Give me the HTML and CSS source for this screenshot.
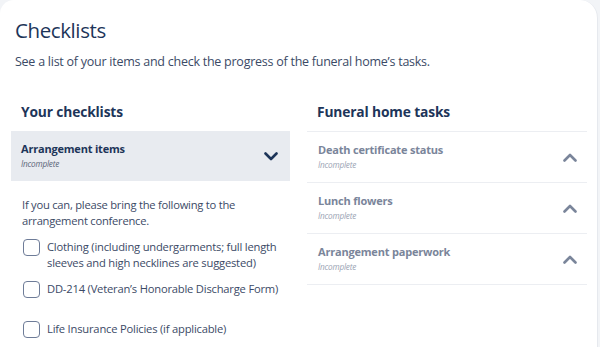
FILE: index.html
```html
<!DOCTYPE html>
<html lang="en">
<head>
<meta charset="utf-8">
<title>Checklists</title>
<link rel="stylesheet" href="styles.css">
</head>
<body>
<main class="card">
  <header class="page-head">
    <h1 class="title">Checklists</h1>
    <p class="subtitle">See a list of your items and check the progress of the funeral home’s tasks.</p>
  </header>
  <div class="columns">
    <section class="column">
      <h2 class="col-title">Your checklists</h2>
      <div class="acc acc-open">
        <div class="acc-head">
          <div class="acc-text">
            <div class="acc-name">Arrangement items</div>
            <div class="acc-status">Incomplete</div>
          </div>
          <svg class="chev chev-dark" width="14" height="9" viewBox="0 0 14 9"><path d="M1.5 1.5 L7 7 L12.5 1.5" fill="none" stroke="currentColor" stroke-width="2.6" stroke-linecap="round" stroke-linejoin="round"/></svg>
        </div>
        <div class="acc-body">
          <p class="intro">If you can, please bring the following to the arrangement conference.</p>
          <ul class="checks">
            <li class="check"><span class="box"></span><span class="label">Clothing (including undergarments; full length sleeves and high necklines are suggested)</span></li>
            <li class="check"><span class="box"></span><span class="label">DD-214 (Veteran’s Honorable Discharge Form)</span></li>
            <li class="check"><span class="box"></span><span class="label">Life Insurance Policies (if applicable)</span></li>
          </ul>
        </div>
      </div>
    </section>
    <section class="column">
      <h2 class="col-title">Funeral home tasks</h2>
      <div class="tasks">
        <div class="task">
          <div class="acc-text">
            <div class="task-name">Death certificate status</div>
            <div class="task-status">Incomplete</div>
          </div>
          <svg class="chev chev-light" width="14" height="9" viewBox="0 0 14 9"><path d="M1.5 7.5 L7 2 L12.5 7.5" fill="none" stroke="currentColor" stroke-width="2.6" stroke-linecap="round" stroke-linejoin="round"/></svg>
        </div>
        <div class="task">
          <div class="acc-text">
            <div class="task-name">Lunch flowers</div>
            <div class="task-status">Incomplete</div>
          </div>
          <svg class="chev chev-light" width="14" height="9" viewBox="0 0 14 9"><path d="M1.5 7.5 L7 2 L12.5 7.5" fill="none" stroke="currentColor" stroke-width="2.6" stroke-linecap="round" stroke-linejoin="round"/></svg>
        </div>
        <div class="task">
          <div class="acc-text">
            <div class="task-name">Arrangement paperwork</div>
            <div class="task-status">Incomplete</div>
          </div>
          <svg class="chev chev-light" width="14" height="9" viewBox="0 0 14 9"><path d="M1.5 7.5 L7 2 L12.5 7.5" fill="none" stroke="currentColor" stroke-width="2.6" stroke-linecap="round" stroke-linejoin="round"/></svg>
        </div>
      </div>
    </section>
  </div>
</main>
</body>
</html>
```

FILE: styles.css
```css
* { box-sizing: border-box; }
html, body { margin: 0; padding: 0; }
body {
  background: #f2f4f7;
  font-family: "Open Sans", "Noto Sans", sans-serif;
  color: #3b4a66;
  overflow: hidden;
}
.card {
  width: 598px;
  min-height: 400px;
  background: #ffffff;
  border-radius: 14px 18px 0 0;
  border-right: 1px solid #e6e9ee;
  padding: 15px 11px 0 11px;
}
.page-head { padding-left: 4px; }
.title {
  margin: 0;
  font-size: 20.5px;
  line-height: 30px;
  letter-spacing: -0.4px;
  font-weight: 400;
  color: #1d3559;
}
.subtitle {
  margin: 8px 0 0;
  font-size: 12.5px;
  line-height: 18px;
  letter-spacing: -0.25px;
  color: #3b4a66;
}
.columns {
  display: grid;
  grid-template-columns: 279px 280px;
  column-gap: 17px;
  margin-top: 31px;
}
.col-title {
  margin: 0 0 9px;
  padding-left: 10px;
  font-size: 13.8px;
  line-height: 20px;
  letter-spacing: -0.15px;
  font-weight: 700;
  color: #1d3559;
}
.acc-head {
  display: flex;
  align-items: center;
  justify-content: space-between;
  height: 50px;
  background: #e8ebf0;
  padding: 0 12px 0 10px;
}
.acc-name {
  font-size: 11px;
  line-height: 14px;
  letter-spacing: -0.2px;
  font-weight: 700;
  color: #1d3559;
}
.acc-status {
  font-size: 8.2px;
  line-height: 12px;
  letter-spacing: -0.2px;
  font-style: italic;
  color: #5b6579;
  margin-top: 2px;
}
.chev { display: block; flex: none; }
.chev-dark { color: #1d3559; }
.chev-light { color: #7a859a; }
.acc-body { padding: 16px 2px 0 11px; }
.intro {
  margin: 0 30px 10px 0;
  font-size: 11.2px;
  line-height: 16px;
  letter-spacing: -0.24px;
  color: #3b4a66;
}
.checks { list-style: none; margin: 0; padding: 0; }
.check {
  display: flex;
  align-items: flex-start;
  gap: 7px;
  min-height: 29px;
  margin-bottom: 11px;
  padding-left: 1px;
}
.box {
  flex: none;
  width: 17px;
  height: 17px;
  border: 1.5px solid #6e7c98;
  border-radius: 4px;
}
.label {
  font-size: 11.2px;
  line-height: 15.5px;
  letter-spacing: -0.2px;
  color: #3b4a66;
  max-width: 232px;
}
.tasks { border-top: 1px solid #eceef2; }
.task {
  display: flex;
  align-items: center;
  justify-content: space-between;
  height: 51px;
  border-bottom: 1px solid #eceef2;
  padding: 0 10px 0 11px;
}
.task-name {
  font-size: 11px;
  line-height: 14px;
  letter-spacing: -0.2px;
  font-weight: 700;
  color: #7a859a;
}
.task-status {
  font-size: 8.2px;
  line-height: 12px;
  letter-spacing: -0.2px;
  font-style: italic;
  color: #9ba4b4;
  margin-top: 2px;
}
```
